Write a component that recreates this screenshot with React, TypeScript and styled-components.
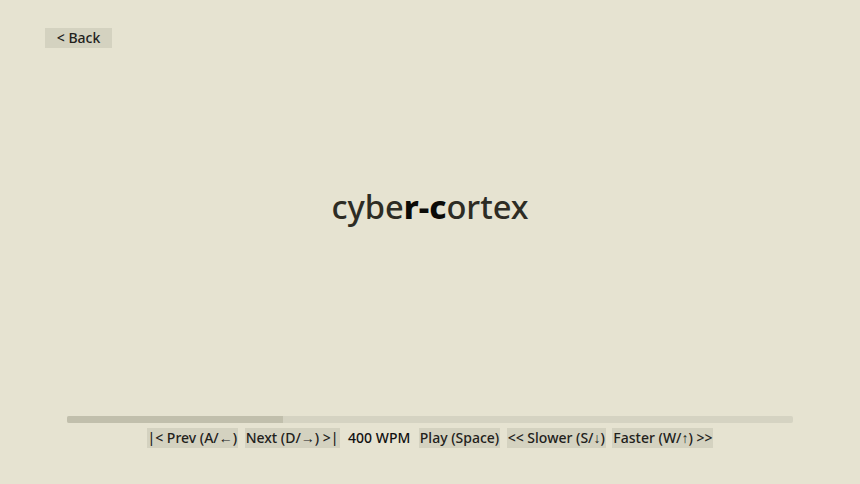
import React from "react";
import styled, { createGlobalStyle } from "styled-components";

const Global = createGlobalStyle`
  html, body { margin: 0; padding: 0; background: #e6e3d1; }
  body { font-family: "Noto Sans", "Open Sans", sans-serif; color: #22211b; }
`;

const Page = styled.div`
  height: 484px;
  display: flex;
  flex-direction: column;
  box-sizing: border-box;
  padding-top: 28px;
`;

const Header = styled.div`
  display: flex;
  padding: 0 45px;
`;

const BackButton = styled.button`
  font-family: inherit;
  font-size: 14px;
  font-weight: 500;
  line-height: 20px;
  height: 20px;
  width: 67px;
  padding: 0;
  border: none;
  background: #d4d2c0;
  color: #22211b;
`;

const Stage = styled.div`
  display: flex;
  justify-content: center;
  margin-top: 137px;
`;

const Word = styled.div`
  font-size: 32.7px;
  font-weight: 500;
  line-height: 44px;
  color: #2d2c24;
`;

const Focus = styled.span`
  font-weight: 800;
  color: #0b0b08;
`;

const Footer = styled.div`
  margin-top: auto;
  padding-bottom: 36px;
  display: flex;
  flex-direction: column;
  align-items: center;
  gap: 5px;
`;

const Track = styled.div`
  width: 726px;
  height: 7px;
  background: #d5d3c2;
  border-radius: 2px;
  overflow: hidden;
`;

const Fill = styled.div`
  height: 100%;
  background: #c1bfac;
`;

const Controls = styled.div`
  display: flex;
  align-items: center;
  gap: 6.5px;
`;

const Ctrl = styled.button`
  font-family: inherit;
  font-size: 14px;
  font-weight: 500;
  line-height: 20px;
  height: 20px;
  padding: 0 1px;
  border: none;
  background: #d4d2c0;
  color: #22211b;
`;

const Wpm = styled.span`
  font-size: 14px;
  font-weight: 500;
  line-height: 20px;
  padding: 0 2px;
  color: #111;
`;

export default function App() {
  const progress = 216 / 726;
  return (
    <>
      <Global />
      <Page>
        <Header>
          <BackButton>&lt; Back</BackButton>
        </Header>
        <Stage>
          <Word>
            cybe<Focus>r-c</Focus>ortex
          </Word>
        </Stage>
        <Footer>
          <Track>
            <Fill style={{ width: `${progress * 100}%` }} />
          </Track>
          <Controls>
            <Ctrl>|&lt; Prev (A/←)</Ctrl>
            <Ctrl>Next (D/→) &gt;|</Ctrl>
            <Wpm>400 WPM</Wpm>
            <Ctrl>Play (Space)</Ctrl>
            <Ctrl>&lt;&lt; Slower (S/↓)</Ctrl>
            <Ctrl>Faster (W/↑) &gt;&gt;</Ctrl>
          </Controls>
        </Footer>
      </Page>
    </>
  );
}
